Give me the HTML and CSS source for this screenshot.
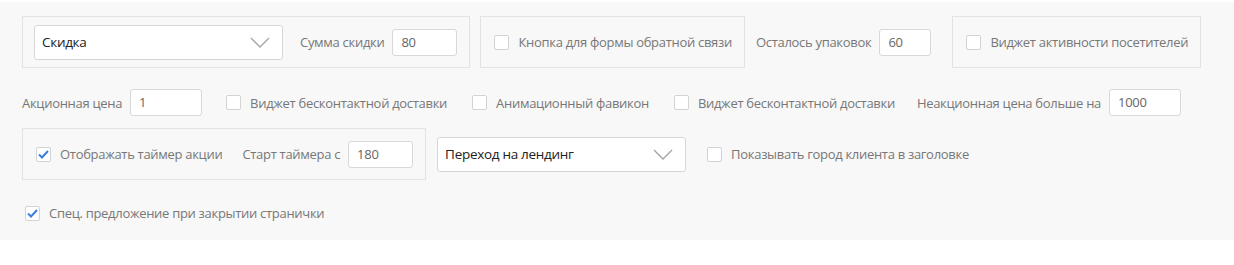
FILE: index.html
```html
<!DOCTYPE html>
<html lang="ru">
<head>
  <meta charset="UTF-8">
  <title>Настройки лендинга</title>
  <link rel="stylesheet" href="styles.css">
</head>
<body>
  <div class="panel">
    <div class="row row-1">
      <div class="box">
        <div class="select"><span>Скидка</span><svg class="chev" width="20" height="11" viewBox="0 0 20 11"><path d="M1 1l9 9 9-9" fill="none" stroke="#a5a5a5" stroke-width="1.4"/></svg></div>
        <label class="field">Сумма скидки <span class="input w-65">80</span></label>
      </div>
      <div class="box">
        <label class="check"><span class="cb"></span>Кнопка для формы обратной связи</label>
      </div>
      <label class="field">Осталось упаковок <span class="input w-52">60</span></label>
      <div class="box box-last">
        <label class="check"><span class="cb"></span>Виджет активности посетителей</label>
      </div>
    </div>

    <div class="row row-2">
      <label class="field">Акционная цена <span class="input w-72">1</span></label>
      <label class="check"><span class="cb"></span>Виджет бесконтактной доставки</label>
      <label class="check"><span class="cb"></span>Анимационный фавикон</label>
      <label class="check"><span class="cb"></span>Виджет бесконтактной доставки</label>
      <label class="field">Неакционная цена больше на <span class="input w-72">1000</span></label>
    </div>

    <div class="row row-3">
      <div class="box">
        <label class="check"><span class="cb on"><svg width="11" height="9" viewBox="0 0 11 9"><path d="M1 4.5l3 3 6-6.5" fill="none" stroke="#3d7fdc" stroke-width="2"/></svg></span>Отображать таймер акции</label>
        <label class="field">Старт таймера с <span class="input w-65">180</span></label>
      </div>
      <div class="select"><span>Переход на лендинг</span><svg class="chev" width="20" height="11" viewBox="0 0 20 11"><path d="M1 1l9 9 9-9" fill="none" stroke="#a5a5a5" stroke-width="1.4"/></svg></div>
      <label class="check"><span class="cb"></span>Показывать город клиента в заголовке</label>
    </div>

    <div class="row row-4">
      <label class="check"><span class="cb on"><svg width="11" height="9" viewBox="0 0 11 9"><path d="M1 4.5l3 3 6-6.5" fill="none" stroke="#3d7fdc" stroke-width="2"/></svg></span>Спец. предложение при закрытии странички</label>
    </div>
  </div>
</body>
</html>
```

FILE: styles.css
```css
body { margin: 0; background: #fff; font-family: "Open Sans", "Liberation Sans", sans-serif; font-size: 13px; letter-spacing: -0.3px; color: #777; }
.panel { margin-top: 2px; height: 206px; padding: 14px 22px 18px; background: #f8f8f8; }

/* строки */
.row { display: flex; align-items: center; }
.row-1 { height: 52px; }
.row-1 > .box + .box { margin-left: 10px; }
.row-1 > .field { margin-left: 11px; }
.row-1 > .box-last { margin-left: 21px; }
.row-2 { height: 27px; margin-top: 21px; }
.row-2 > .check { margin-left: 24px; }
.row-2 > .check + .check { margin-left: 25px; }
.row-2 > .field:last-child { margin-left: 22px; }
.row-3 { height: 52px; margin-top: 12px; }
.row-3 > .select { margin-left: 11px; }
.row-3 > .check { margin-left: 21px; }
.row-4 { margin-top: 24px; padding-left: 3px; }

/* рамки-группы */
.box { display: flex; align-items: center; height: 50px; padding: 0 12px 0 11px; border: 1px solid #e3e3e3; }
.box > .check { padding-left: 2px; }
.box > .field { margin-left: 17px; }
.box > .check + .field { margin-left: 20px; }

/* контролы */
.select { display: flex; align-items: center; justify-content: space-between; box-sizing: border-box; width: 249px; height: 35px; padding: 0 12px 0 7px; background: #fff; border: 1px solid #d6d6d6; border-radius: 3px; color: #222; font-size: 13.5px; }
.field { display: flex; align-items: center; white-space: nowrap; }
.input { display: inline-block; box-sizing: border-box; height: 27px; line-height: 25px; margin-left: 8px; padding: 0 8px; background: #fff; border: 1px solid #d8d8d8; border-radius: 3px; color: #666; }
.w-52 { width: 52px; }
.w-65 { width: 65px; }
.w-72 { width: 72px; }
.check { display: flex; align-items: center; white-space: nowrap; cursor: pointer; }
.cb { display: flex; align-items: center; justify-content: center; box-sizing: border-box; width: 15px; height: 15px; margin-right: 9px; background: #fff; border: 1px solid #d3d3d3; border-radius: 2px; }
```
